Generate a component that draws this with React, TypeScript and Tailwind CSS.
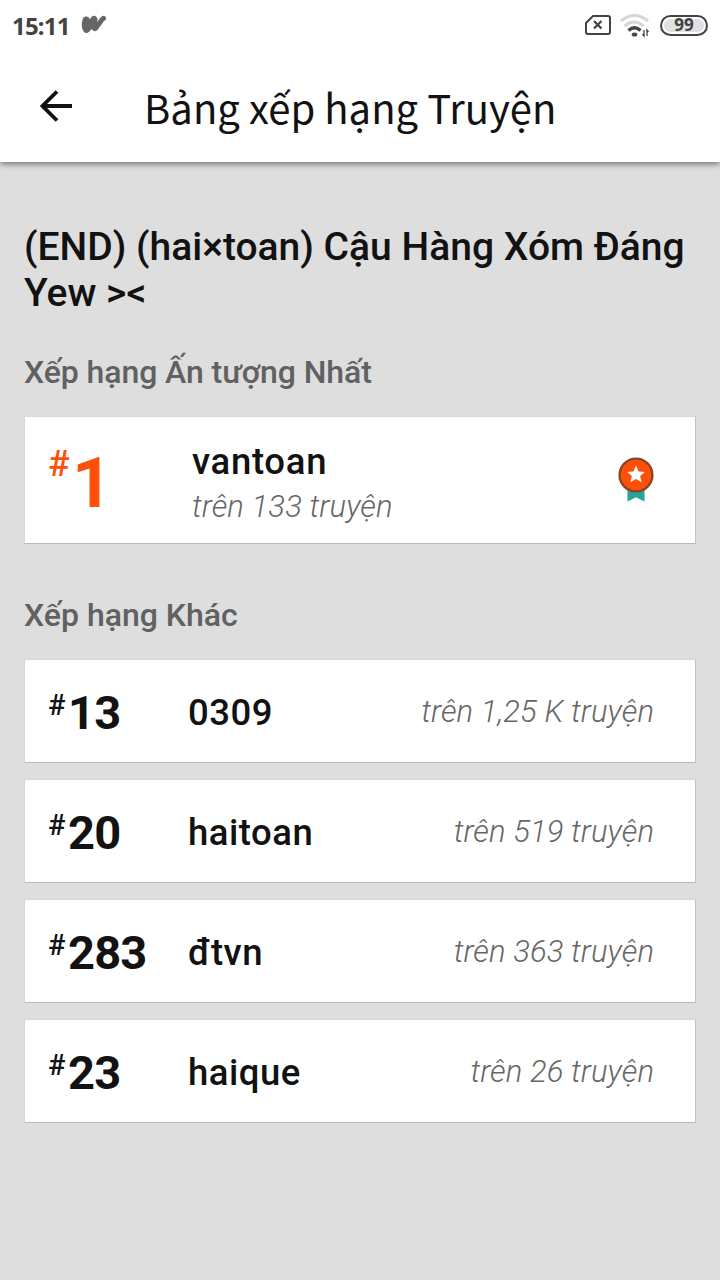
type Rank = {
  place: string;
  tag: string;
  total: string;
};

const otherRanks: Rank[] = [
  { place: '13', tag: '0309', total: 'trên 1,25 K truyện' },
  { place: '20', tag: 'haitoan', total: 'trên 519 truyện' },
  { place: '283', tag: 'đtvn', total: 'trên 363 truyện' },
  { place: '23', tag: 'haique', total: 'trên 26 truyện' },
];

function StatusBar() {
  return (
    <div className="flex h-[50px] items-center px-3 text-[#434343]">
      <span className="relative top-px w-[58px] whitespace-nowrap font-['Noto_Sans'] text-[24px] font-bold tracking-[-0.8px]">15:11</span>
      <svg className="ml-[11px]" width="26" height="20" viewBox="0 0 26 20" fill="none" stroke="#666" strokeLinecap="round" strokeLinejoin="round">
        <path d="M5 5C4 9 4 13 5.500 14.500 8 13.500 10 7.500 13 4.500c-.5 3-.5 5.500 1 8" strokeWidth="7" />
        <path d="M14.500 12.500C18 10 19.500 5.500 22.500 3.300" strokeWidth="5" />
      </svg>
      <div className="ml-auto flex items-center">
        <svg width="26" height="20" viewBox="0 0 26 20" fill="none" stroke="#434343" strokeWidth="2" strokeLinejoin="round">
          <path d="M8 1h15q2 0 2 2v14q0 2-2 2H3q-2 0-2-2V8z" />
          <path d="m9 6 7.500 7.500m0-7.500L9 13.500" strokeWidth="2.200" />
        </svg>
        <svg className="ml-[9px] mt-px" width="30" height="24" viewBox="0 0 30 24" fill="none" stroke="#434343" strokeWidth="3">
          <path d="M1 7q13.500-11 27 0M4.500 12q9.500-8 19 0" stroke="#d6d6d6" />
          <path d="M8.500 16.500q6-5.500 12 0" strokeWidth="3.500" />
          <ellipse cx="14.500" cy="20.500" rx="2.800" ry="2" fill="#434343" stroke="none" />
          <path d="M24 16v6l-1.500-2M27 22v-6l1.500 2" strokeWidth="1.300" />
        </svg>
        <div className="ml-[10px] flex h-[21px] w-12 items-center justify-center rounded-full border-2 border-[#434343] bg-white p-[2px]">
          <div className="flex h-full w-full items-center justify-center rounded-full bg-[#e1e1e1] pb-px font-['Noto_Sans'] text-[17px] font-bold leading-none">99</div>
        </div>
      </div>
    </div>
  );
}

function Medal() {
  return (
    <svg width="36" height="45" viewBox="0 0 36 45">
      <path d="M9.500 28h17v16.500l-8.500-4.200-8.500 4.200z" fill="#25a497" />
      <circle cx="18" cy="18" r="16.400" fill="#ff500a" stroke="#8c4426" strokeWidth="2.400" />
      <path d="m18 8.500 2.600 5.900 6.300.6-4.800 4.100 1.500 6.100-5.600-3.200-5.600 3.200 1.500-6.100L9.100 15l6.300-.6z" fill="#fff" />
    </svg>
  );
}

function RankRow({ place, tag, total }: Rank) {
  return (
    <div className="flex h-[104px] items-center border border-[#d8d8d8] border-r-[#c2c2c2] border-b-[#b9b9b9] bg-white pl-[23px] pr-[41px]">
      <div className="flex w-[140px] items-start pt-[3px]">
        <span className="w-5 text-[29px] font-medium leading-[40px]">#</span>
        <span className="text-[47px] font-bold leading-[56px] tracking-[-0.8px]">{place}</span>
      </div>
      <span className="pt-1 text-[36.5px] font-medium tracking-[0.5px]">{tag}</span>
      <span className="ml-auto pt-[2px] text-[31px] font-light italic tracking-[0.08px] text-[#666]">{total}</span>
    </div>
  );
}

export default function App() {
  return (
    <div className="flex h-[1280px] w-[720px] flex-col bg-[#dedede] font-['Roboto',sans-serif] text-[#121212]">
      <header className="relative h-[162px] bg-white shadow-[0_2px_6px_rgba(0,0,0,0.5)]">
        <StatusBar />
        <div className="flex h-28 items-center pl-10">
          <svg width="33" height="32" viewBox="0 0 33 32" fill="none" stroke="#121212" strokeWidth="3.800">
            <path d="M32 16H3M17 1.500 2.500 16 17 30.500" />
          </svg>
          <h1 className="ml-[71px] pt-[2px] font-['Noto_Sans_CJK_SC','Noto_Sans',sans-serif] text-[40px] tracking-[0.05px]">Bảng xếp hạng Truyện</h1>
        </div>
      </header>
      <main className="px-6">
        <h2 className="mt-[62px] text-[39px] font-medium leading-[46px]">(END) (hai×toan) Cậu Hàng Xóm Đáng Yew &gt;&lt;</h2>
        <h3 className="mt-9 text-[32px] font-medium leading-[40px] tracking-[-0.08px] text-[#616161]">Xếp hạng Ấn tượng Nhất</h3>
        <div className="mt-6 flex h-32 items-center border border-[#d8d8d8] border-r-[#c2c2c2] border-b-[#b9b9b9] bg-white pl-[23px] pr-[41px]">
          <div className="flex w-36 items-start pt-1.5 text-[#ff500a]">
            <span className="w-6 text-[36px] font-medium leading-[42px]">#</span>
            <span className="text-[70px] font-bold leading-[80px]">1</span>
          </div>
          <div className="flex flex-col pt-[7px]">
            <span className="text-[36.500px] font-medium leading-[46px] tracking-[0.7px]">vantoan</span>
            <span className="text-[31px] font-light italic leading-[44px] tracking-[0.1px] text-[#666]">trên 133 truyện</span>
          </div>
          <div className="mr-[0.5px] ml-auto pb-[2px]"><Medal /></div>
        </div>
        <h3 className="mt-[51px] text-[32px] font-medium leading-[40px] text-[#616161]">Xếp hạng Khác</h3>
        <div className="mt-6 flex flex-col gap-4">
          {otherRanks.map((rank) => (
            <RankRow key={rank.tag} {...rank} />
          ))}
        </div>
      </main>
    </div>
  );
}
